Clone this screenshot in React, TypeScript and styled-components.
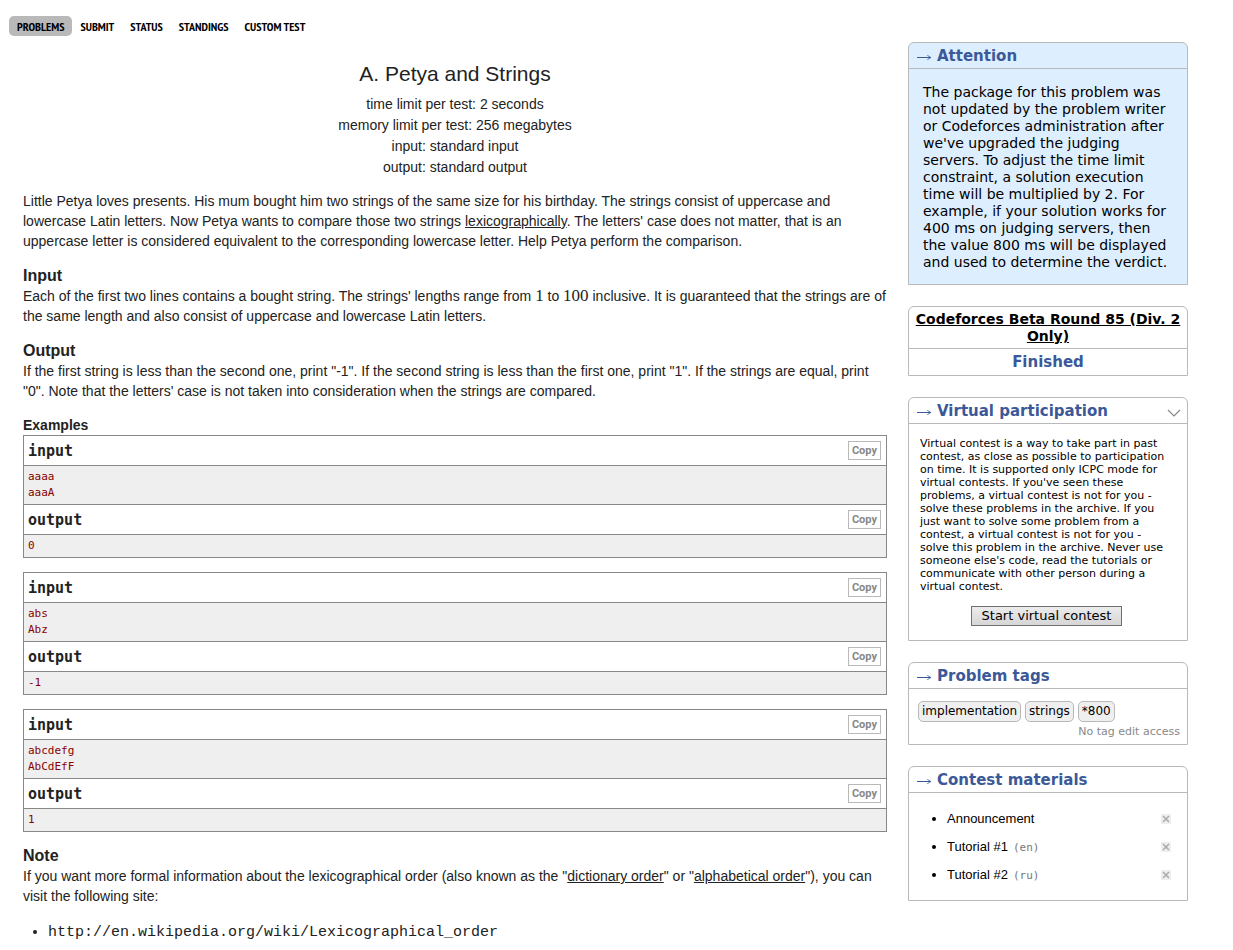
import React from "react";
import styled, { createGlobalStyle } from "styled-components";

const sans = `"Liberation Sans", Arial, sans-serif`;
const verdana = `Verdana, "DejaVu Sans", sans-serif`;
const mono = `Consolas, "DejaVu Sans Mono", monospace`;

const GlobalStyle = createGlobalStyle`
  *, *::before, *::after { box-sizing: border-box; }
  body { margin: 0; background: #fff; color: #000; font-family: ${verdana}; }
  h1, h2, h3, p, ul, pre { margin: 0; padding: 0; font-weight: inherit; }
`;

const Page = styled.div`
  padding: 16px 45px 8px 9px;
`;

const Menu = styled.nav`
  display: flex;
  height: 20px;
`;

const MenuLink = styled.a<{ $active?: boolean }>`
  padding: 0 8px;
  border-radius: 5px;
  background: ${(p) => (p.$active ? "#b9b9b9" : "transparent")};
  color: #000;
  font: bold 12px/22px "PT Sans Narrow", "Liberation Sans Narrow", sans-serif;
  text-transform: uppercase;
  text-decoration: none;
`;

const Columns = styled.div`
  display: flex;
  align-items: flex-start;
  gap: 21px;
  padding-top: 6px;
`;

const Statement = styled.main`
  flex: 1;
  min-width: 0;
  padding: 18px 0 0 14px;
  color: #222;
  font: 14px/20px ${sans};

  a { color: inherit; }
`;

const Header = styled.header`
  text-align: center;
  line-height: 21px;
  margin-bottom: 13px;
`;

const Title = styled.h1`
  font-size: 21px;
  line-height: 28px;
  margin-bottom: 6px;
`;

const Section = styled.section`
  margin-bottom: 15px;
`;

const SectionTitle = styled.h2`
  font-size: 16px;
  line-height: 20px;
  font-weight: bold;
`;

const ExamplesTitle = styled.h2`
  font-size: 14px;
  line-height: 19px;
  font-weight: bold;
`;

const MathText = styled.span`
  font: 17px/16px "Liberation Serif", "Times New Roman", serif;
`;

const Sample = styled.div`
  border: 1px solid #888;
  margin-bottom: 14px;
`;

const SampleHead = styled.div<{ $divided?: boolean }>`
  display: flex;
  align-items: center;
  justify-content: space-between;
  height: ${(p) => (p.$divided ? 31 : 30)}px;
  padding: 0 5px 0 4px;
  border-top: ${(p) => (p.$divided ? "1px solid #888" : "0")};
  border-bottom: 1px solid #888;
  font: bold 15px/20px ${mono};
`;

const CopyButton = styled.button`
  height: 19px;
  padding: 0 3px;
  border: 1px solid #b9b9b9;
  background: #fff;
  color: #888;
  font: bold 11px/17px Roboto, sans-serif;
  cursor: pointer;
`;

const SampleData = styled.pre`
  padding: 3px 4px;
  background: #efefef;
  color: #880000;
  font: 11px/16px ${mono};
`;

const SiteList = styled.ul`
  padding: 15px 0 0 25px;
`;

const Teletype = styled.span`
  font: 15px/18px "Liberation Mono", "Courier New", monospace;
`;

const Sidebar = styled.aside`
  flex: 0 0 280px;
  display: flex;
  flex-direction: column;
  gap: 21px;
`;

const Panel = styled.section<{ $tinted?: boolean }>`
  border: 1px solid #b9b9b9;
  border-radius: 6px 6px 0 0;
  background: ${(p) => (p.$tinted ? "#ddeeff" : "#fff")};
`;

const Caption = styled.h2`
  display: flex;
  align-items: center;
  gap: 5px;
  height: 26px;
  padding: 0 6px 0 8px;
  border-bottom: 1px solid #b9b9b9;
  color: #3b5998;
  font: bold 15px/26px ${verdana};
`;

const Arrow = styled.svg`
  flex: none;
  margin-top: 3px;
`;

const Collapse = styled.button`
  display: flex;
  margin-left: auto;
  padding: 4px 0 0;
  border: 0;
  background: none;
  cursor: pointer;
`;

const AttentionText = styled.p`
  padding: 15px 14px 13px;
  font-size: 14px;
  line-height: 17px;
`;

const RoundName = styled.div`
  padding: 4px 4px 3px;
  border-bottom: 1px solid #b9b9b9;
  text-align: center;
  font-size: 14px;
  font-weight: bold;
  line-height: 17px;

  a { color: #000; }
`;

const RoundState = styled.div`
  color: #3b5998;
  text-align: center;
  font-size: 15px;
  font-weight: bold;
  line-height: 26px;
`;

const VirtualBody = styled.div`
  padding: 13px 14px 14px 11px;
  text-align: center;

  p { text-align: left; font-size: 11px; line-height: 13px; margin-bottom: 12px; }
`;

const StartButton = styled.button`
  height: 20px;
  padding: 0 10px;
  border: 1px solid #707070;
  background: linear-gradient(#ececec, #d6d6d6);
  color: #000;
  font: 13px/18px ${verdana};
  cursor: pointer;
`;

const Tags = styled.div`
  display: flex;
  gap: 4px;
  padding: 12px 9px 0;
`;

const Tag = styled.a`
  padding: 0 3px;
  border: 1px solid #b9b9b9;
  border-radius: 5px;
  background: #efefef;
  color: #000;
  font-size: 12px;
  line-height: 19px;
  text-decoration: none;
`;

const TagNote = styled.p`
  padding: 3px 7px 5px;
  color: #888;
  text-align: right;
  font-size: 11px;
  line-height: 14px;
`;

const Materials = styled.ul`
  display: flex;
  flex-direction: column;
  gap: 8px;
  padding: 16px 16px 15px 38px;
  font: 13px/20px ${sans};
`;

const MaterialRow = styled.div`
  display: flex;
  align-items: center;
  justify-content: space-between;

  a { color: #000; text-decoration: none; }
`;

const Language = styled.span`
  margin-left: 5px;
  color: #777;
  font: 11px/14px ${mono};
`;

const RemoveButton = styled.button`
  display: flex;
  padding: 0;
  border: 0;
  background: #eee;
  cursor: pointer;
`;

const menu = ["Problems", "Submit", "Status", "Standings", "Custom test"];

const samples = [
  { input: "aaaa\naaaA", output: "0" },
  { input: "abs\nAbz", output: "-1" },
  { input: "abcdefg\nAbCdEfF", output: "1" },
];

const materials = [
  { name: "Announcement" },
  { name: "Tutorial #1", lang: "(en)" },
  { name: "Tutorial #2", lang: "(ru)" },
];

function PanelCaption({ children, collapsible }: { children: string; collapsible?: boolean }) {
  return (
    <Caption>
      <Arrow width="15" height="7" viewBox="0 0 15 7" aria-hidden="true">
        <path d="M0 3.5 H13" stroke="#3b5998" strokeWidth="1" fill="none" />
        <path d="M10.5 1 Q11.5 3 14 3.5 Q11.5 4 10.5 6" fill="none" stroke="#3b5998" strokeWidth="0.9" />
      </Arrow>
      {children}
      {collapsible && (
        <Collapse aria-label="Collapse">
          <svg width="14" height="8" viewBox="0 0 14 8" fill="none" stroke="#888" strokeWidth="1.2">
            <path d="M1 1 L7 7 L13 1" />
          </svg>
        </Collapse>
      )}
    </Caption>
  );
}

export default function App() {
  return (
    <Page>
      <GlobalStyle />
      <Menu>
        {menu.map((item, i) => (
          <MenuLink key={item} href="#" $active={i === 0}>{item}</MenuLink>
        ))}
      </Menu>
      <Columns>
        <Statement>
          <Header>
            <Title>A. Petya and Strings</Title>
            <div>time limit per test: 2 seconds</div>
            <div>memory limit per test: 256 megabytes</div>
            <div>input: standard input</div>
            <div>output: standard output</div>
          </Header>
          <Section>
            <p>
              Little Petya loves presents. His mum bought him two strings of the same size for his
              birthday. The strings consist of uppercase and lowercase Latin letters. Now Petya wants
              to compare those two strings <a href="#">lexicographically</a>. The letters' case does
              not matter, that is an uppercase letter is considered equivalent to the corresponding
              lowercase letter. Help Petya perform the comparison.
            </p>
          </Section>
          <Section>
            <SectionTitle>Input</SectionTitle>
            <p>
              Each of the first two lines contains a bought string. The strings' lengths range
              from <MathText>1</MathText> to <MathText>100</MathText> inclusive. It is guaranteed that
              the strings are of the same length and also consist of uppercase and lowercase Latin
              letters.
            </p>
          </Section>
          <Section>
            <SectionTitle>Output</SectionTitle>
            <p>
              If the first string is less than the second one, print "-1". If the second string is
              less than the first one, print "1". If the strings are equal, print "0". Note that the
              letters' case is not taken into consideration when the strings are compared.
            </p>
          </Section>
          <ExamplesTitle>Examples</ExamplesTitle>
          {samples.map((s) => (
            <Sample key={s.input}>
              <SampleHead>input<CopyButton>Copy</CopyButton></SampleHead>
              <SampleData>{s.input}</SampleData>
              <SampleHead $divided>output<CopyButton>Copy</CopyButton></SampleHead>
              <SampleData>{s.output}</SampleData>
            </Sample>
          ))}
          <SectionTitle>Note</SectionTitle>
          <p>
            If you want more formal information about the lexicographical order (also known as the
            "<a href="#">dictionary order</a>" or "<a href="#">alphabetical order</a>"), you can visit
            the following site:
          </p>
          <SiteList>
            <li><Teletype>http://en.wikipedia.org/wiki/Lexicographical_order</Teletype></li>
          </SiteList>
        </Statement>
        <Sidebar>
          <Panel $tinted>
            <PanelCaption>Attention</PanelCaption>
            <AttentionText>
              The package for this problem was not updated by the problem writer or Codeforces
              administration after we've upgraded the judging servers. To adjust the time limit
              constraint, a solution execution time will be multiplied by 2. For example, if your
              solution works for 400 ms on judging servers, then the value 800 ms will be displayed
              and used to determine the verdict.
            </AttentionText>
          </Panel>
          <Panel>
            <RoundName><a href="#">Codeforces Beta Round 85 (Div. 2 Only)</a></RoundName>
            <RoundState>Finished</RoundState>
          </Panel>
          <Panel>
            <PanelCaption collapsible>Virtual participation</PanelCaption>
            <VirtualBody>
              <p>
                Virtual contest is a way to take part in past contest, as close as possible to
                participation on time. It is supported only ICPC mode for virtual contests. If you've
                seen these problems, a virtual contest is not for you - solve these problems in the
                archive. If you just want to solve some problem from a contest, a virtual contest is
                not for you - solve this problem in the archive. Never use someone else's code, read
                the tutorials or communicate with other person during a virtual contest.
              </p>
              <StartButton>Start virtual contest</StartButton>
            </VirtualBody>
          </Panel>
          <Panel>
            <PanelCaption>Problem tags</PanelCaption>
            <Tags>
              <Tag href="#">implementation</Tag>
              <Tag href="#">strings</Tag>
              <Tag href="#">*800</Tag>
            </Tags>
            <TagNote>No tag edit access</TagNote>
          </Panel>
          <Panel>
            <PanelCaption>Contest materials</PanelCaption>
            <Materials>
              {materials.map((m) => (
                <li key={m.name}>
                  <MaterialRow>
                    <span>
                      <a href="#">{m.name}</a>
                      {m.lang && <Language>{m.lang}</Language>}
                    </span>
                    <RemoveButton aria-label={`Remove ${m.name}`}>
                      <svg width="10" height="10" viewBox="0 0 10 10" stroke="#aaa" strokeWidth="1.5">
                        <path d="M2 2 L8 8 M8 2 L2 8" />
                      </svg>
                    </RemoveButton>
                  </MaterialRow>
                </li>
              ))}
            </Materials>
          </Panel>
        </Sidebar>
      </Columns>
    </Page>
  );
}
